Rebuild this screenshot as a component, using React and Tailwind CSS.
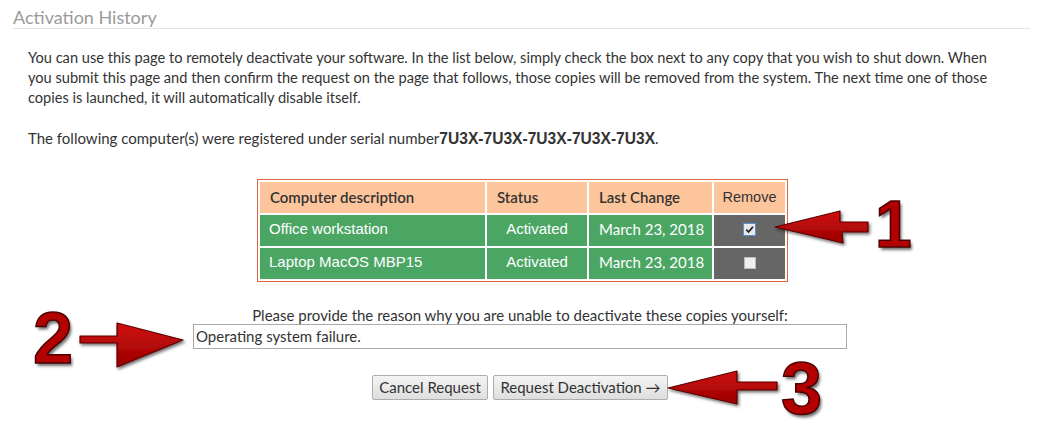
import React from 'react'

const lato = { fontFamily: 'Lato, "Open Sans", sans-serif' }
const arial = { fontFamily: '"Liberation Sans", Arial, sans-serif' }

const rows = [
  { name: 'Office workstation', status: 'Activated', date: 'March 23, 2018', checked: true },
  { name: 'Laptop MacOS MBP15', status: 'Activated', date: 'March 23, 2018', checked: false },
]

function Arrows() {
  return (
    <svg className="absolute left-0 top-0 pointer-events-none" width="1047" height="433" viewBox="0 0 1047 433">
      <defs>
        <filter id="sh" x="-20%" y="-20%" width="140%" height="160%">
          <feDropShadow dx="1.5" dy="2" stdDeviation="1.5" floodColor="#000" floodOpacity="0.55" />
        </filter>
        <linearGradient id="rg" x1="0" y1="0" x2="0" y2="1">
          <stop offset="0" stopColor="#d01010" />
          <stop offset="1" stopColor="#9a0000" />
        </linearGradient>
      </defs>
      <g fill="url(#rg)" stroke="#5a0000" strokeWidth="1.2" strokeLinejoin="round" filter="url(#sh)">
        <polygon points="775,227 840,211 840,222 868,222 868,232 842,232 843,243" />
        <polygon points="80,336 117,336 117,323 183,340 117,367 117,343 80,343" />
        <polygon points="668,388 737,371 737,382 777,382 777,390 737,390 737,404" />
      </g>
    </svg>
  )
}

function Num({ children, className }) {
  return (
    <div
      className={`absolute leading-none font-bold text-[#b30000] pointer-events-none ${className}`}
      style={{
        ...arial,
        WebkitTextStroke: '1.5px #4a0000',
        textShadow: '2px 3px 3px rgba(0,0,0,0.55)',
      }}
    >
      {children}
    </div>
  )
}

export default function App() {
  return (
    <div className="relative w-[1047px] h-[433px] bg-white overflow-hidden text-[#333]" style={lato}>
      <div className="ml-[13px] mr-[17px] pt-[8px] pb-[2px] border-b border-[#e3e3e3]">
        <h1 className="text-[18px] leading-[18px] text-[#9a9a9a]">Activation History</h1>
      </div>

      <div className="pl-[28px] pr-[10px] pt-[19px] leading-[20px]">
        <p className="text-[14.6px] whitespace-nowrap">
          You can use this page to remotely deactivate your software. In the list below, simply check the box next to any
          copy that you wish to shut down. When
          <br />
          you submit this page and then confirm the request on the page that follows, those copies will be removed from the
          system. The next time one of those
          <br />
          copies is launched, it will automatically disable itself.
        </p>
        <p className="mt-[20px] text-[15px]">
          The following computer(s) were registered under serial number
          <b className="text-[15.6px]" style={arial}>7U3X-7U3X-7U3X-7U3X-7U3X</b>.
        </p>
      </div>

      <div className="flex justify-center pt-[30px] pr-[2px]">
        <table className="border border-[#e0653c] border-separate border-spacing-[2px] text-[15px]">
          <thead>
            <tr className="bg-[#fdc59b] h-[31px]">
              <th className="w-[225px] text-left font-semibold pl-[10px]">Computer description</th>
              <th className="w-[100px] text-left font-semibold pl-[10px]">Status</th>
              <th className="w-[123px] text-left font-semibold pl-[10px]">Last Change</th>
              <th className="w-[71px] text-center font-normal text-[14.5px]" style={arial}>
                Remove
              </th>
            </tr>
          </thead>
          <tbody className="text-white">
            {rows.map((r) => (
              <tr key={r.name} className="h-[31px]">
                <td className="bg-[#4ba664] pl-[9px] pb-[2px]" style={arial}>
                  {r.name}
                </td>
                <td className="bg-[#4ba664] text-center pb-[2px]" style={arial}>
                  {r.status}
                </td>
                <td className="bg-[#4ba664] pl-[10px] pb-[2px]">{r.date}</td>
                <td className="bg-[#666666] pb-[2px]">
                  <div className="flex justify-center">
                    {r.checked ? (
                      <span className="w-[13px] h-[13px] bg-[#e8e8e8] border border-[#5b8fd6] flex items-center justify-center">
                        <svg width="9" height="9" viewBox="0 0 10 10">
                          <path d="M1.5 5.2 L4 7.8 L8.8 2" fill="none" stroke="#222" strokeWidth="2" />
                        </svg>
                      </span>
                    ) : (
                      <span className="w-[12px] h-[12px] bg-[#eeeeee] border border-[#bbbbbb]" />
                    )}
                  </div>
                </td>
              </tr>
            ))}
          </tbody>
        </table>
      </div>

      <div className="flex flex-col items-center pt-[23px] pr-[7px] text-[15px]">
        <div className="leading-[20px]">Please provide the reason why you are unable to deactivate these copies yourself:</div>
        <div className="w-[654px] h-[25px] border border-[#a9a9a9] px-[2px] leading-[23px] mt-[-1px]">
          Operating system failure.
        </div>
        <div className="flex gap-[5px] mt-[26px]">
          <button className="h-[25px] w-[116px] border border-[#adadad] bg-gradient-to-b from-[#f4f4f4] to-[#dedede] text-[15px] text-[#333] rounded-[2px]">
            Cancel Request
          </button>
          <button className="h-[25px] w-[175px] border border-[#adadad] bg-gradient-to-b from-[#f4f4f4] to-[#dedede] text-[15px] text-[#333] rounded-[2px]">
            Request Deactivation →
          </button>
        </div>
      </div>

      <Arrows />
      <Num className="text-[66px] left-[875px] top-[191px]">1</Num>
      <Num className="text-[72px] left-[33px] top-[302px]">2</Num>
      <Num className="text-[74px] left-[781px] top-[352px]">3</Num>
    </div>
  )
}
